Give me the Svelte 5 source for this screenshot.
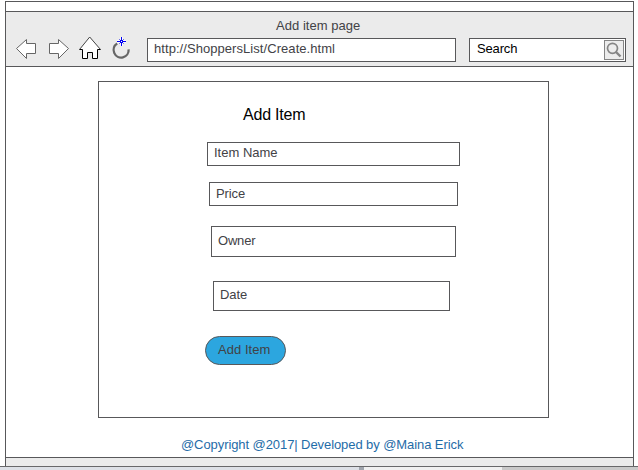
<script>
  const fields = [
    { label: 'Item Name', left: 108, width: 253, height: 24, gap: 16, line: 20, spacing: 0 },
    { label: 'Price', left: 110, width: 249, height: 24, gap: 20, line: 21, spacing: -0.1 },
    { label: 'Owner', left: 112, width: 245, height: 31, gap: 24, line: 28, spacing: -0.2 },
    { label: 'Date', left: 114, width: 237, height: 30, gap: 25, line: 26, spacing: -0.1 }
  ];
</script>

<div class="page">
  <div class="window">
    <div class="strip"></div>
    <header>
      <div class="title"><span>Add item page</span></div>
      <div class="toolbar">
        <svg class="icons" width="141" height="30" viewBox="6 34 141 30" fill="#fff" stroke="#666" stroke-width="1">
          <path d="M16.5 48.5 26.5 39.5V43.5H35.5V53.5H26.5V58.5Z" />
          <path d="M68.5 48.5 58.5 39.5V43.5H49.5V53.5H58.5V58.5Z" />
          <path stroke="none" d="M79.5 49.5 89.5 37 100.5 49.5H97.5V58.5H92.5V52.5H87.5V58.5H82.5V49.5Z" />
          <path fill="none" stroke="#444" d="M79.5 49.5 89.7 37 100.5 49.5" />
          <path fill="none" stroke="#000" d="M79.5 49.5H82.5V58.5H87.5V52.5H92.5V58.5H97.5V49.5H100.5" />
          <path fill="none" stroke="#666" stroke-width="2.3" d="M117.2 43.6A7.5 7.5 0 1 0 128.6 49.3" />
          <path fill="none" stroke="#fff" stroke-width="2.5" d="M117 41.5H126M121.5 37V46" />
          <path fill="none" stroke="#0000f0" d="M117 41.5H120M123 41.5H126M121.5 37V40M121.5 43V46" />
          <path fill="none" stroke="#3c3ce8" stroke-width=".7" d="M119 39 120.5 40.5M124 39 122.5 40.5M119 44 120.5 42.5M124 44 122.5 42.5" />
          <rect x="120.5" y="40.5" width="2" height="2" stroke="#0000f0" />
        </svg>
        <div class="address"><span>http://ShoppersList/Create.html</span></div>
        <div class="search">
          <span>Search</span>
          <svg width="20" height="20" viewBox="0 0 20 20" fill="none" stroke="#858585">
            <rect x=".5" y=".5" width="19" height="19" fill="#ececec" />
            <circle cx="8.5" cy="8.3" r="5" stroke-width="1.7" />
            <path d="M12 12 16.5 16.5" stroke-width="2.4" />
          </svg>
        </div>
      </div>
    </header>
    <main>
      <section>
        <h1>Add Item</h1>
        {#each fields as f}
          <div
            class="field"
            style="margin-left:{f.left}px;width:{f.width}px;height:{f.height}px;margin-bottom:{f.gap}px;line-height:{f.line}px;letter-spacing:{f.spacing}px"
          >{f.label}</div>
        {/each}
        <button>Add Item</button>
      </section>
      <p><span>@Copyright @2017| Developed by @Maina Erick</span></p>
    </main>
    <div class="status"></div>
  </div>
  <div class="edge"><i></i><b></b><em></em><u></u></div>
</div>

<style>
  :global(body) { background: #fff; overflow: hidden; }
  .page, .page * { box-sizing: border-box; }
  .page {
    width: 638px; height: 470px; padding-top: 1px; background: #fff;
    font: 13px "Liberation Sans", Arial, sans-serif; color: #424246;
    white-space: nowrap; overflow: hidden;
  }
  .window {
    width: 629px; height: 465px; margin-left: 5px;
    border: 1px solid #58585a; border-bottom: 0;
    display: flex; flex-direction: column;
  }
  .strip { height: 9px; }
  header { height: 56px; background: #ebebeb; border: solid #58585a; border-width: 1px 0; }
  .title { height: 26px; padding-left: 270px; line-height: 28px; }
  .title span { letter-spacing: .04px; }
  .toolbar { display: flex; height: 28px; }
  .icons { display: block; margin-top: -4px; flex: none; }
  .address { width: 309px; height: 24px; border: 1px solid #58585a; background: #fff; padding-left: 6px; line-height: 20px; }
  .address span { letter-spacing: .06px; }
  .search {
    width: 157px; height: 24px; margin-left: 13px; padding: 0 1px 0 7px;
    border: 1px solid #58585a; background: #fff; color: #000;
    display: flex; justify-content: space-between; line-height: 20px;
  }
  .search span { letter-spacing: -.15px; }
  .search svg { margin-top: 1px; }
  main { height: 390px; }
  section { width: 451px; height: 337px; margin: 14px 0 0 92px; border: 1px solid #58585a; }
  h1 { margin: 0; height: 60px; padding: 23px 0 0 144px; font-size: 16px; line-height: 20px; font-weight: 400; color: #000; letter-spacing: -.2px; }
  .field { border: 1px solid #58585a; padding-left: 6px; }
  button {
    display: block; width: 81px; height: 29px; margin-left: 106px; padding: 0 0 2px 12px;
    border: 1px solid #58585a; border-radius: 15px; background: #2ca6df;
    font: inherit; color: #424246; text-align: left; letter-spacing: .05px;
  }
  p { margin: 0; padding: 17px 0 0 175px; line-height: 20px; color: #1f6ca8; }
  p span { letter-spacing: -.08px; }
  .status { height: 9px; background: #ebebeb; border-top: 1px solid #58585a; }
  .edge { height: 4px; border-top: 1px solid #68686a; display: flex; background: #f0f0f0; }
  .edge i { width: 359px; background: #dde0e6; }
  .edge b { width: 5px; background: #a0a5ad; }
  .edge em { width: 138px; }
  .edge u { width: 136px; background: #c9c9c9; }
</style>
